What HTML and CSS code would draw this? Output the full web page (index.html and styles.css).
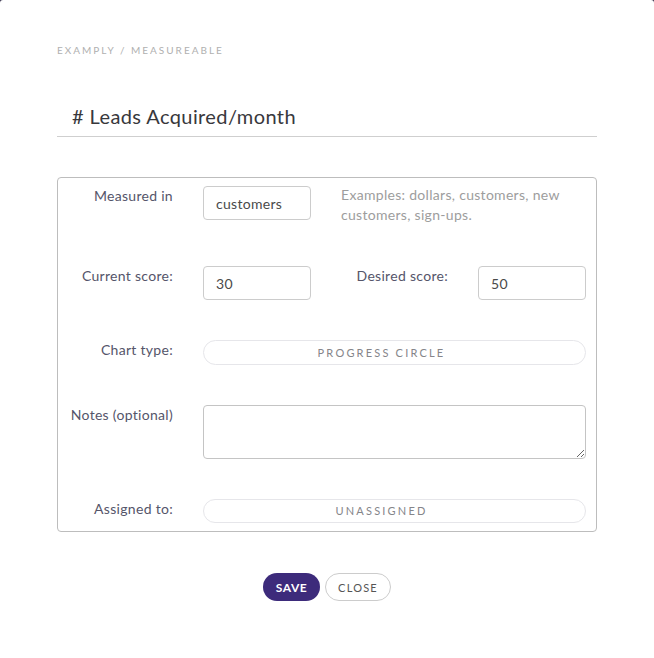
FILE: index.html
```html
<!DOCTYPE html>
<html>
<head>
<meta charset="utf-8">
<link rel="stylesheet" href="styles.css">
</head>
<body>
<div class="modal">
  <div class="breadcrumb">EXAMPLY / MEASUREABLE</div>
  <div class="title">
    <input class="title-input" type="text" value="# Leads Acquired/month">
  </div>
  <div class="card">
    <div class="row row-first">
      <label class="label">Measured in</label>
      <input class="field" type="text" value="customers">
      <div class="help">Examples: dollars, customers, new customers, sign-ups.</div>
    </div>
    <div class="row">
      <label class="label">Current score:</label>
      <input class="field" type="text" value="30">
      <label class="label label-flex">Desired score:</label>
      <input class="field" type="text" value="50">
    </div>
    <div class="row">
      <label class="label">Chart type:</label>
      <div class="pill">PROGRESS CIRCLE</div>
    </div>
    <div class="row">
      <label class="label">Notes (optional)</label>
      <textarea class="notes"></textarea>
    </div>
    <div class="row">
      <label class="label">Assigned to:</label>
      <div class="pill pill-b">UNASSIGNED</div>
    </div>
  </div>
  <div class="actions">
    <button class="btn btn-save">SAVE</button>
    <button class="btn btn-close">CLOSE</button>
  </div>
</div>
</body>
</html>
```

FILE: styles.css
```css
html, body {
  margin: 0;
  padding: 0;
  background: #3a3650;
}
body {
  font-family: Lato, "Open Sans", sans-serif;
}
.modal {
  background: #ffffff;
  width: 654px;
  height: 658px;
  box-sizing: border-box;
  border-radius: 3px 3px 0 0;
  padding: 44px 57px 0 57px;
}
.breadcrumb {
  font-size: 10px;
  line-height: 12px;
  letter-spacing: 2px;
  color: #b0b0b0;
}
.title {
  margin-top: 40px;
  border-bottom: 1px solid #cfcfcf;
  height: 40px;
}
.title-input {
  border: none;
  outline: none;
  width: 100%;
  box-sizing: border-box;
  height: 40px;
  padding: 0 0 0 15px;
  font-family: inherit;
  font-size: 20px;
  letter-spacing: 0.4px;
  color: #38383c;
  background: transparent;
}
.card {
  margin-top: 40px;
  border: 1px solid #bdbdbd;
  border-radius: 4px;
  padding: 8px 10px 8px 0;
  display: flex;
  flex-direction: column;
  gap: 40px;
}
.row {
  display: flex;
  align-items: flex-start;
}
.row-first {
  min-height: 40px;
}
.label {
  width: 115px;
  flex: none;
  text-align: right;
  font-size: 14px;
  line-height: 20px;
  letter-spacing: 0.3px;
  color: #55556a;
  margin-right: 30px;
}
.label-flex {
  flex: 1;
  width: auto;
}
.field {
  width: 108px;
  height: 34px;
  box-sizing: border-box;
  border: 1px solid #cccccc;
  border-radius: 4px;
  padding: 0 12px;
  font-family: inherit;
  font-size: 14px;
  letter-spacing: 0.3px;
  color: #4a4a4a;
  outline: none;
  flex: none;
}
.help {
  margin-left: 30px;
  flex: 1;
  font-size: 14px;
  line-height: 20px;
  letter-spacing: 0.3px;
  color: #9d9d9d;
  margin-top: -1px;
}
.pill {
  flex: 1;
  height: 25px;
  box-sizing: border-box;
  border: 1px solid #e6e6ea;
  border-radius: 13px;
  text-align: center;
  padding-right: 26px;
  font-size: 11px;
  line-height: 23px;
  letter-spacing: 2.2px;
  color: #85858a;
}
.pill-b {
  height: 24px;
  line-height: 22px;
}
.notes {
  flex: 1;
  height: 54px;
  box-sizing: border-box;
  border: 1px solid #c4c4c4;
  border-radius: 4px;
  margin: 0;
  font-family: inherit;
  font-size: 14px;
  outline: none;
}
.actions {
  margin-top: 41px;
  display: flex;
  justify-content: center;
  gap: 5px;
}
.btn {
  height: 28px;
  border-radius: 14px;
  font-family: inherit;
  font-size: 11px;
  padding: 0;
  cursor: pointer;
}
.btn-save {
  width: 57px;
  background: #3d2b7b;
  border: none;
  color: #ffffff;
  font-weight: 700;
  font-size: 12px;
  letter-spacing: 0.6px;
}
.btn-close {
  width: 66px;
  background: #ffffff;
  border: 1px solid #cccccc;
  color: #555555;
  letter-spacing: 1.2px;
}
```
